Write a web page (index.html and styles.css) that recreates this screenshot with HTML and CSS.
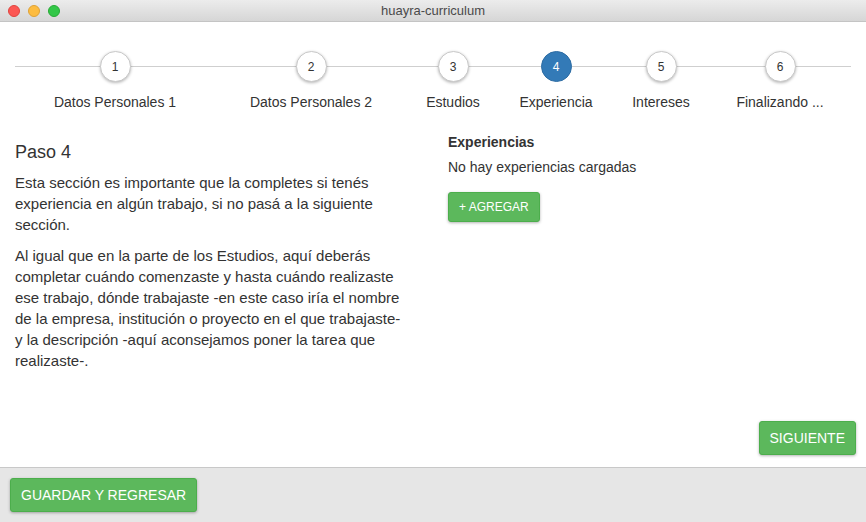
FILE: index.html
```html
<!DOCTYPE html>
<html lang="es">
<head>
<meta charset="utf-8">
<title>huayra-curriculum</title>
<link rel="stylesheet" href="styles.css">
</head>
<body>
<div class="window">
  <header class="titlebar">
    <div class="lights">
      <span class="light red"></span>
      <span class="light yellow"></span>
      <span class="light green"></span>
    </div>
    <div class="title">huayra-curriculum</div>
    <div></div>
  </header>
  <main class="main">
    <ol class="stepper">
      <li class="step"><span class="dot">1</span><span class="label">Datos Personales 1</span></li>
      <li class="step"><span class="dot">2</span><span class="label">Datos Personales 2</span></li>
      <li class="step"><span class="dot">3</span><span class="label">Estudios</span></li>
      <li class="step active"><span class="dot">4</span><span class="label">Experiencia</span></li>
      <li class="step"><span class="dot">5</span><span class="label">Intereses</span></li>
      <li class="step"><span class="dot">6</span><span class="label">Finalizando ...</span></li>
    </ol>
    <div class="content">
      <section class="col">
        <h3 class="heading">Paso 4</h3>
        <p class="text">Esta sección es importante que la completes si tenés experiencia en algún trabajo, si no pasá a la siguiente sección.</p>
        <p class="text">Al igual que en la parte de los Estudios, aquí deberás completar cuándo comenzaste y hasta cuándo realizaste ese trabajo, dónde trabajaste -en este caso iría el nombre de la empresa, institución o proyecto en el que trabajaste- y la descripción -aquí aconsejamos poner la tarea que realizaste-.</p>
      </section>
      <section class="col">
        <h4 class="subheading">Experiencias</h4>
        <p class="empty">No hay experiencias cargadas</p>
        <button class="btn btn-sm">+ AGREGAR</button>
      </section>
    </div>
    <div class="actions">
      <button class="btn">SIGUIENTE</button>
    </div>
  </main>
  <footer class="footer">
    <button class="btn">GUARDAR Y REGRESAR</button>
  </footer>
</div>
</body>
</html>
```
FILE: styles.css
```css
* { box-sizing: border-box; }
html, body { margin: 0; padding: 0; }
body {
  font-family: "Liberation Sans", Arial, sans-serif;
  color: #333;
  background: #fff;
}
.window {
  width: 866px;
  height: 522px;
  display: flex;
  flex-direction: column;
  overflow: hidden;
}
.titlebar {
  height: 22px;
  flex: 0 0 22px;
  display: grid;
  grid-template-columns: 1fr auto 1fr;
  align-items: center;
  background: linear-gradient(#ececec, #d6d6d6);
  border-bottom: 1px solid #c4c4c4;
}
.lights { display: flex; gap: 8px; padding-left: 8px; }
.light { width: 12px; height: 12px; border-radius: 50%; display: block; }
.red { background: #fc5753; border: 1px solid #e0443e; }
.yellow { background: #fdbc40; border: 1px solid #dea236; }
.green { background: #33c748; border: 1px solid #27aa35; }
.title { font-size: 13px; color: #4a4a4a; }

.main {
  flex: 1;
  display: flex;
  flex-direction: column;
}
.stepper {
  list-style: none;
  margin: 29px 15px 0;
  padding: 0;
  display: grid;
  grid-template-columns: 200px 192px 92px 114px 96px 142px;
  background: linear-gradient(#cfcfcf, #cfcfcf) no-repeat 0 15px / 100% 1px;
}
.step {
  display: flex;
  flex-direction: column;
  align-items: center;
}
.dot {
  width: 31px;
  height: 31px;
  border-radius: 50%;
  background: #fff;
  border: 1px solid #c9c9c9;
  box-shadow: 0 1px 3px rgba(0,0,0,0.28);
  display: flex;
  align-items: center;
  justify-content: center;
  font-size: 12px;
  color: #333;
}
.step.active .dot {
  background: #337ab7;
  border-color: #2e6da4;
  color: #fff;
  box-shadow: none;
}
.label {
  margin-top: 10px;
  font-size: 14px;
  line-height: 20px;
  color: #333;
  white-space: nowrap;
}

.content {
  display: grid;
  grid-template-columns: 1fr 1fr;
  margin-top: 20px;
}
.col { padding: 0 15px; }
.heading {
  margin: 10px 0 10px;
  font-size: 18px;
  font-weight: normal;
  line-height: 20px;
}
.text {
  margin: 0 0 10px;
  max-width: 395px;
  font-size: 15px;
  line-height: 21px;
}
.subheading {
  margin: 0;
  font-size: 14px;
  font-weight: bold;
  line-height: 20px;
}
.empty {
  margin: 5px 0 15px;
  font-size: 14px;
  line-height: 20px;
}
.btn {
  font-family: "Liberation Sans", Arial, sans-serif;
  background: #5cb85c;
  border: 1px solid #4cae4c;
  border-radius: 3px;
  color: #fff;
  font-size: 14px;
  height: 34px;
  padding: 0 10px;
  box-shadow: 0 1px 3px rgba(0,0,0,0.3);
  cursor: pointer;
}
.btn-sm {
  font-size: 12px;
  height: 30px;
  padding: 0 10px;
}
.actions {
  margin-top: auto;
  display: flex;
  justify-content: flex-end;
  padding: 0 10px 12px;
}
.footer {
  height: 55px;
  flex: 0 0 55px;
  background: #e6e6e6;
  border-top: 1px solid #c8c8c8;
  padding: 10px 10px 0;
}
```
